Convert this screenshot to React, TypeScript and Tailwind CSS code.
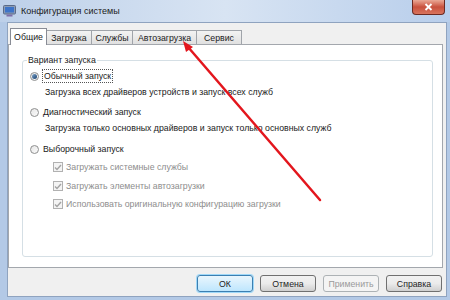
const tabs = [
  { label: 'Общие', w: 'w-[37px]', active: true },
  { label: 'Загрузка', w: 'w-[46px]' },
  { label: 'Службы', w: 'w-[42px]' },
  { label: 'Автозагрузка', w: 'w-[65px]' },
  { label: 'Сервис', w: 'w-[46px]' },
]

function Radio({ checked }: { checked?: boolean }) {
  return (
    <span className="w-[9px] h-[9px] rounded-full border border-[#8e8f8f] bg-gradient-to-br from-[#e6e6e6] to-[#fbfbfb] flex items-center justify-center shrink-0">
      {checked && <span className="w-[5px] h-[5px] rounded-full bg-gradient-to-br from-[#7fa6cc] to-[#173f6c]" />}
    </span>
  )
}

function Check() {
  return (
    <span className="w-[10px] h-[10px] border border-[#b1b1b1] bg-[#f4f4f4] flex items-center justify-center shrink-0">
      <svg width="8" height="7" viewBox="0 0 8 7">
        <path d="M1 3.5 L3 5.5 L7 1" fill="none" stroke="#a3a3a3" strokeWidth="1.4" />
      </svg>
    </span>
  )
}

function Button({ label, def, disabled }: { label: string; def?: boolean; disabled?: boolean }) {
  return (
    <div
      className={
        def
          ? 'w-[56px] h-[17px] rounded-[3px] border border-[#3c7fb1] bg-gradient-to-b from-[#eaf6fd] to-[#bee6fd] shadow-[0_0_0_1px_#9fd8f8] flex items-center justify-center'
          : disabled
            ? 'w-[56px] h-[17px] rounded-[3px] border border-[#adb2b5] bg-[#f4f4f4] flex items-center justify-center'
            : 'w-[56px] h-[17px] rounded-[3px] border border-[#707070] bg-gradient-to-b from-[#f2f2f2] via-[#ebebeb] to-[#cfcfcf] flex items-center justify-center'
      }
    >
      <span className={disabled ? 'text-[#9a9a9a]' : 'text-[#1e1e1e]'}>{label}</span>
    </div>
  )
}

export default function App() {
  return (
    <div className="relative w-[450px] h-[300px] overflow-hidden bg-[#b3c9e6] flex flex-col font-['Liberation_Sans',Arial,sans-serif] text-[8.75px] leading-[12px] text-[#1a1a1a]">
      {/* title bar */}
      <div className="h-[22px] flex items-start bg-gradient-to-r from-[#bdd0e9] via-[#d8e4f3] to-[#b8ceeb]">
        <svg width="13" height="12" viewBox="0 0 13 12" className="ml-[3px] mt-[5px]">
          <rect x="0.5" y="0.5" width="12" height="8.5" rx="1" fill="#8b9bb4" stroke="#5a6b88" />
          <rect x="2" y="2" width="9" height="5.5" fill="#3d74c8" />
          <rect x="3.5" y="9.5" width="6" height="2" fill="#7d6fa8" />
        </svg>
        <span className="ml-[5px] mt-[5px] text-[9px] leading-[13px] text-[#1b1b1b]">Конфигурация системы</span>
        <div className="ml-auto mr-[5px] w-[33px] h-[15px] rounded-b-[4px] border border-t-0 border-[#6b2a22] bg-gradient-to-b from-[#e9a896] via-[#c8503d] to-[#d8745d] flex items-center justify-center">
          <svg width="9" height="8" viewBox="0 0 9 8">
            <path d="M1.5 1 L7.5 7 M7.5 1 L1.5 7" stroke="#ffffff" strokeWidth="1.8" />
          </svg>
        </div>
      </div>

      {/* window body */}
      <div className="ml-[7px] w-[440px] h-[275px] border border-[#8fa3bf] bg-[#f0f0f0] flex flex-col">
        {/* tabs */}
        <div className="mt-[5px] h-[16px] pl-[2px] flex items-end">
          {tabs.map(t =>
            t.active ? (
              <div
                key={t.label}
                className={`${t.w} h-[17px] -mb-[1px] relative z-10 bg-white border border-b-0 border-[#898c95] flex items-center justify-center`}
              >
                {t.label}
              </div>
            ) : (
              <div
                key={t.label}
                className={`${t.w} h-[14px] -ml-[1px] border border-b-0 border-[#a0a4aa] bg-gradient-to-b from-[#f3f3f3] to-[#e0e0e0] flex items-center justify-center`}
              >
                {t.label}
              </div>
            )
          )}
        </div>

        {/* tab panel */}
        <div className="w-[435px] h-[224px] border border-[#a3a7ad] bg-white pt-[15px] pl-[13px]">
          <div className="w-[411px] h-[197px] border border-[#d5dfe5] rounded-[3px] pl-[7px] flex flex-col">
            <span className="-mt-[7px] ml-[-3px] px-[1px] self-start bg-white">Вариант запуска</span>

            <div className="mt-[2px] h-[16px] flex items-center gap-[3px]">
              <Radio checked />
              <span className="px-[1px] border border-dotted border-[#555]">Обычный запуск</span>
            </div>
            <div className="h-[16px] flex items-center ml-[15px]">
              Загрузка всех драйверов устройств и запуск всех служб
            </div>

            <div className="mt-[4px] h-[16px] flex items-center gap-[4px]">
              <Radio />
              <span>Диагностический запуск</span>
            </div>
            <div className="h-[16px] flex items-center ml-[15px]">
              Загрузка только основных драйверов и запуск только основных служб
            </div>

            <div className="mt-[5px] h-[16px] flex items-center gap-[4px]">
              <Radio />
              <span>Выборочный запуск</span>
            </div>

            <div className="mt-[2px] ml-[23px] h-[16px] flex items-center gap-[3px] text-[#8d8d8d]">
              <Check />
              <span>Загружать системные службы</span>
            </div>
            <div className="mt-[3px] ml-[23px] h-[16px] flex items-center gap-[3px] text-[#8d8d8d]">
              <Check />
              <span>Загружать элементы автозагрузки</span>
            </div>
            <div className="mt-[2px] ml-[23px] h-[16px] flex items-center gap-[3px] text-[#8d8d8d]">
              <Check />
              <span>Использовать оригинальную конфигурацию загрузки</span>
            </div>
          </div>
        </div>

        {/* buttons */}
        <div className="mt-[7px] pr-[4px] flex justify-end gap-[7px]">
          <Button label="ОК" def />
          <Button label="Отмена" />
          <Button label="Применить" disabled />
          <Button label="Справка" />
        </div>
      </div>

      {/* red arrow overlay */}
      <svg className="absolute left-0 top-0 pointer-events-none" width="450" height="300" viewBox="0 0 450 300">
        <line x1="320" y1="200" x2="188" y2="47" stroke="#e3161d" strokeWidth="2.5" strokeLinecap="round" />
        <polygon points="183,41 193,47 186,52" fill="#e3161d" />
      </svg>
    </div>
  )
}
